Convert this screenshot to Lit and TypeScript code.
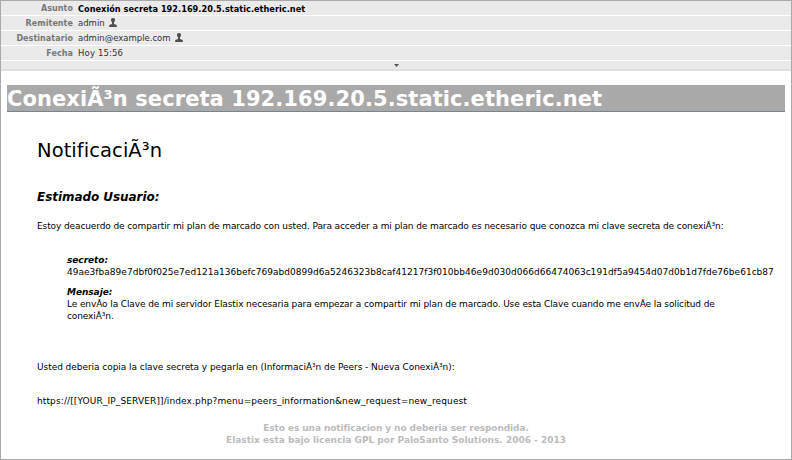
import { LitElement, html, css } from "lit";
import { customElement } from "lit/decorators.js";

const person = html`<svg class="person" viewBox="0 0 8 9" aria-hidden="true">
  <path d="M4 0C5.5 0 6.2 0.9 6 2.3C5.9 3.2 5.4 3.9 5 4.3V5.9L7.8 7V9H0.2V7L3 5.9V4.3C2.6 3.9 2.1 3.2 2 2.3C1.8 0.9 2.5 0 4 0Z" />
</svg>`;

const headers = [
  { label: "Asunto", value: "Conexión secreta 192.169.20.5.static.etheric.net", kind: "subject", contact: false },
  { label: "Remitente", value: "admin", kind: "sender", contact: true },
  { label: "Destinatario", value: "admin@example.com", kind: "recipient", contact: true },
  { label: "Fecha", value: "Hoy 15:56", kind: "date", contact: false },
];

@customElement("app-root")
export class AppRoot extends LitElement {
  static styles = css`
    :host {
      display: block;
      box-sizing: border-box;
      height: 460px;
      overflow: hidden;
      border: 1px solid #a9a9a9;
      background: #fff;
      color: #000;
      font-family: "DejaVu Sans", Verdana, sans-serif;
      font-size: 9px;
      font-variant-ligatures: none;
      line-height: 12px;
    }
    p, h1, h2, h3, dl, dt, dd { margin: 0; }
    .row {
      display: grid;
      grid-template-columns: 72px 1fr;
      column-gap: 5px;
      box-sizing: border-box;
      height: 15px;
      padding-top: 1px;
      line-height: 14px;
      border-bottom: 1px solid #fff;
      background: #eaeaea;
      font-size: 8px;
      color: #333;
      white-space: nowrap;
    }
    .label { text-align: right; font-weight: bold; color: #777; letter-spacing: 0.06px; }
    .value { display: flex; height: 14px; gap: 4px; font-size: 8.5px; line-height: 12px; }
    .subject { font-size: 8.2px; font-weight: bold; color: #000; line-height: 14px; letter-spacing: 0.02px; }
    .date { letter-spacing: 0.15px; }
    .person { width: 8px; height: 9px; margin-top: 1px; fill: #505050; }
    .toggle {
      display: flex;
      justify-content: center;
      align-items: center;
      height: 8px;
      background: #eaeaea;
      border-bottom: 2px solid #dfdfdf;
    }
    .arrow { width: 5px; height: 3px; fill: #555; }
    .title {
      height: 26px;
      margin: 14px 6px 0;
      line-height: 29px;
      background: #a9a9a9;
      border-bottom: 1px solid #6e8799;
      color: #fff;
      font-size: 21px;
      font-weight: bold;
      letter-spacing: 0.08px;
      white-space: nowrap;
    }
    .body { padding: 0 36px; white-space: nowrap; }
    .heading { margin-top: 27px; font-size: 19.5px; font-weight: normal; line-height: 24px; letter-spacing: 0.07px; }
    .greeting { margin-top: 26px; font-size: 12px; font-style: italic; line-height: 16px; letter-spacing: -0.06px; }
    .intro { margin-top: 15px; letter-spacing: -0.107px; }
    .details { margin: 22px 0 0 30px; }
    .term { font-weight: bold; font-style: italic; letter-spacing: -0.05px; }
    .detail + .term { margin-top: 8px; }
    .key { letter-spacing: 0.026px; }
    .message { letter-spacing: -0.106px; }
    .copy { margin-top: 39px; letter-spacing: -0.05px; }
    .link { margin-top: 22px; letter-spacing: 0.12px; }
    .footer { margin-top: 15px; color: #bbb; font-weight: bold; text-align: center; }
    .notice { letter-spacing: -0.09px; }
  `;

  render() {
    return html`
      <header>
        ${headers.map(
          (h) => html`<div class="row">
            <span class="label">${h.label}</span>
            <span class="value ${h.kind}"><span>${h.value}</span>${h.contact ? person : ""}</span>
          </div>`
        )}
        <div class="toggle"><svg class="arrow" viewBox="0 0 5 3"><path d="M0 0H5L2.5 3Z" /></svg></div>
      </header>
      <h1 class="title">ConexiÃ³n secreta 192.169.20.5.static.etheric.net</h1>
      <main class="body">
        <h2 class="heading">NotificaciÃ³n</h2>
        <h3 class="greeting">Estimado Usuario:</h3>
        <p class="intro">Estoy deacuerdo de compartir mi plan de marcado con usted. Para acceder a mi plan de marcado es necesario que conozca mi clave secreta de conexiÃ³n:</p>
        <dl class="details">
          <dt class="term">secreto:</dt>
          <dd class="detail key">49ae3fba89e7dbf0f025e7ed121a136befc769abd0899d6a5246323b8caf41217f3f010bb46e9d030d066d66474063c191df5a9454d07d0b1d7fde76be61cb87</dd>
          <dt class="term">Mensaje:</dt>
          <dd class="detail message">Le envÃo la Clave de mi servidor Elastix necesaria para empezar a compartir mi plan de marcado. Use esta Clave cuando me envÃe la solicitud de<br />conexiÃ³n.</dd>
        </dl>
        <p class="copy">Usted deberia copia la clave secreta y pegarla en (InformaciÃ³n de Peers - Nueva ConexiÃ³n):</p>
        <p class="link">https://[[YOUR_IP_SERVER]]/index.php?menu=peers_information&amp;new_request=new_request</p>
        <div class="footer"><div class="notice">Esto es una notificacion y no deberia ser respondida.</div><div>Elastix esta bajo licencia GPL por PaloSanto Solutions. 2006 - 2013</div></div>
      </main>
    `;
  }
}
